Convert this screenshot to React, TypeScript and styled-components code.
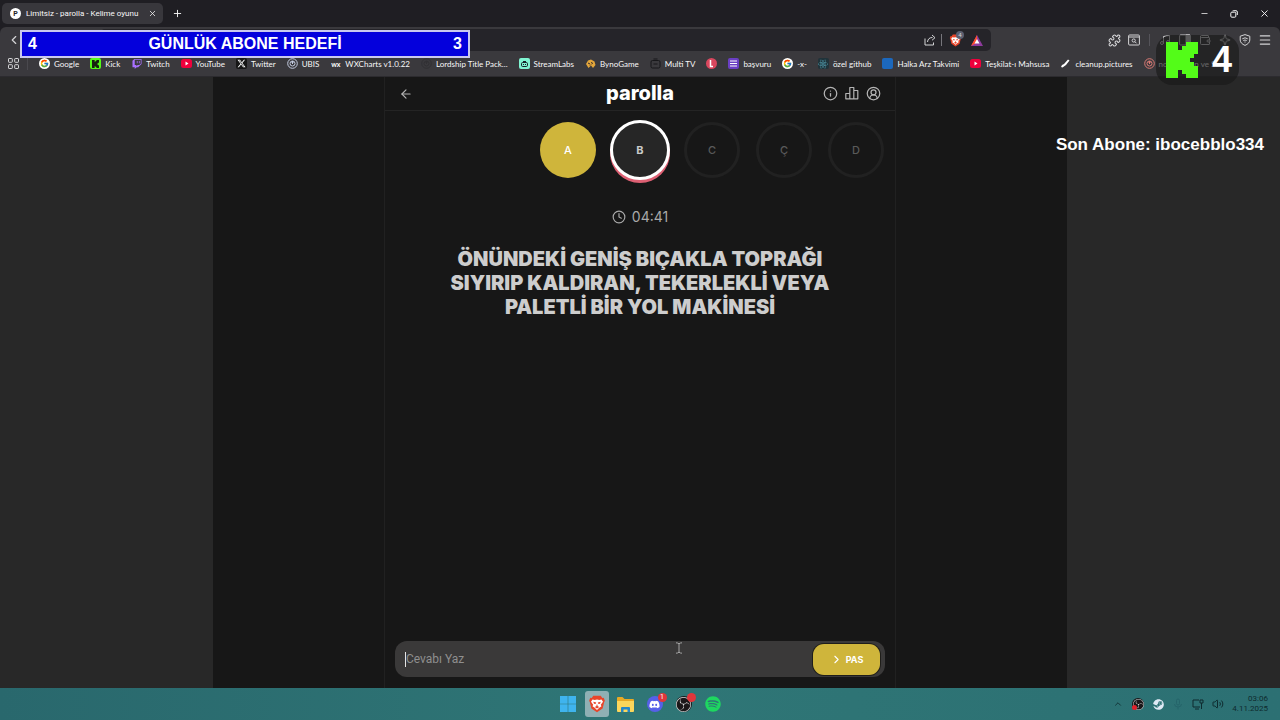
import React from "react";
import styled, { createGlobalStyle } from "styled-components";
import {
  ArrowLeft,
  ChevronLeft,
  ChevronRight,
  ChevronUp,
  CircleUserRound,
  Clock,
  Info,
  Menu,
  Minus,
  Music,
  Plus,
  Puzzle,
  Sparkle,
  Volume2,
  Wallet,
  X,
} from "lucide-react";
import { FaDiscord, FaReact, FaSpotify, FaSteam, FaTwitch, FaXTwitter } from "react-icons/fa6";
import { FcGoogle } from "react-icons/fc";
import { SiObsstudio } from "react-icons/si";

const GlobalStyle = createGlobalStyle`
  *, *::before, *::after { box-sizing: border-box; }
  body { margin: 0; background: #282828; }
  button { border: 0; padding: 0; background: none; color: inherit; font: inherit; cursor: pointer; }
  a { color: inherit; text-decoration: none; }
  svg { display: block; flex: none; }
`;

const Screen = styled.div`
  position: relative;
  display: flex;
  flex-direction: column;
  min-height: 100vh;
  overflow: hidden;
  color: #f8f8f8;
  font-family: Roboto, "Noto Sans", sans-serif;
  font-size: 8px;
`;

/* ---------- browser ---------- */

const TitleBar = styled.header`
  display: flex;
  align-items: center;
  height: 27px;
  padding: 0 10px 0 2px;
  background: #1f1e23;
`;

const Tab = styled.div`
  display: flex;
  align-items: center;
  gap: 5px;
  width: 161px;
  height: 21px;
  padding: 0 6px 0 8px;
  border-radius: 5px;
  background: #38373c;
`;

const TabTitle = styled.span`
  flex: 1;
  white-space: nowrap;
`;

const IconButton = styled.button<{ $size?: number }>`
  position: relative;
  display: flex;
  align-items: center;
  justify-content: center;
  width: ${(p) => p.$size ?? 12}px;
  height: ${(p) => p.$size ?? 12}px;
`;

const NewTab = styled(IconButton)`
  margin-left: 8px;
`;

const WindowControls = styled.div`
  display: flex;
  gap: 18px;
  margin-left: auto;
`;

const Toolbar = styled.nav`
  display: flex;
  align-items: center;
  height: 27px;
  padding: 0 9px 1px 8px;
  border-radius: 6px 6px 0 0;
  background: #3a393d;
  color: #d4d4d6;
`;

const ToolbarBack = styled.div`
  background: #1f1e23;
`;

const AddressBar = styled.div`
  display: flex;
  flex: 1;
  align-items: center;
  justify-content: flex-end;
  gap: 5px;
  height: 22px;
  margin: 0 117px 0 80px;
  padding: 0 5px 0 7px;
  border-radius: 5px;
  background: #252429;
`;

const ShieldWrap = styled.span`
  position: relative;
`;

const ShieldCount = styled.span`
  position: absolute;
  top: -1px;
  right: -1px;
  width: 8px;
  height: 8px;
  border-radius: 4px;
  background: #5c5f70;
  font-size: 6px;
  line-height: 8px;
  text-align: center;
`;

const Separator = styled.span<{ $color?: string }>`
  width: 1px;
  height: 12px;
  background: ${(p) => p.$color ?? "#55545a"};
`;

const ToolGroup = styled.div`
  display: flex;
  align-items: center;
  gap: 8px;
`;

const ToolSeparator = styled(Separator)`
  margin: 0 1px;
`;

const Bookmarks = styled.nav`
  display: flex;
  align-items: center;
  gap: 11px;
  height: 23px;
  padding: 0 8px 3px;
  border-bottom: 1px solid #2c2b2f;
  background: #3a393d;
  font-family: Lato, Roboto, sans-serif;
`;

const Bookmark = styled.a`
  display: flex;
  flex: none;
  align-items: center;
  gap: 4px;
  line-height: 12px;
  white-space: nowrap;
`;

const Glyph = styled.span<{ $bg?: string; $color?: string; $round?: boolean }>`
  display: flex;
  align-items: center;
  justify-content: center;
  width: 11px;
  height: 11px;
  border-radius: ${(p) => (p.$round ? 6 : 2)}px;
  background: ${(p) => p.$bg ?? "transparent"};
  color: ${(p) => p.$color ?? "#fff"};
  font-size: 7px;
  font-weight: 700;
`;

/* ---------- game ---------- */

const Page = styled.main`
  display: flex;
  flex: 1;
  justify-content: center;
  background: #282828;
  font-family: Inter, Roboto, sans-serif;
`;

const Stage = styled.div`
  display: flex;
  flex: 0 1 854px;
  justify-content: center;
  background: #171717;
`;

const Game = styled.section`
  display: flex;
  flex: 0 1 512px;
  flex-direction: column;
  border: solid #212121;
  border-width: 0 1px;
`;

const GameHeader = styled.header`
  display: grid;
  grid-template-columns: 1fr auto 1fr;
  align-items: center;
  height: 34px;
  padding: 0 14px;
  border-bottom: 1px solid #242424;
  color: #b4b4b4;
`;

const Brand = styled.h1`
  margin: 0;
  padding-bottom: 2px;
  color: #fff;
  font-size: 20px;
  font-weight: 800;
  line-height: 24px;
`;

const HeaderActions = styled.div`
  display: flex;
  justify-content: flex-end;
  gap: 7px;
`;

const Letters = styled.ol`
  display: flex;
  align-items: center;
  justify-content: flex-end;
  gap: 16px;
  height: 77px;
  margin: 0;
  padding: 0 11px;
  list-style: none;
`;

type LetterState = "passed" | "current" | "idle";

const letterLooks: Record<LetterState, string> = {
  passed: "background: #cfb53b; color: #fff;",
  current:
    "width: 60px; height: 60px; margin: 0 -2px; border: 3px solid #fff; background: #262626; color: #c9c9c9; font-weight: 700; box-shadow: 0 3px 0 #dd6073;",
  idle: "border: 3px solid #212121; color: #5a5a5a;",
};

const Letter = styled.li<{ $state: LetterState }>`
  display: flex;
  align-items: center;
  justify-content: center;
  width: 56px;
  height: 56px;
  border-radius: 50%;
  font-size: 11px;
  font-weight: 500;
  ${(p) => letterLooks[p.$state]}
`;

const Timer = styled.div`
  display: flex;
  align-items: center;
  justify-content: center;
  gap: 6px;
  margin-top: 20px;
  color: #a9a9a9;
  font-size: 14px;
  line-height: 18px;
`;

const Question = styled.h2`
  margin: 21px 48px 0;
  color: #cdcdcd;
  font-size: 20px;
  font-weight: 900;
  line-height: 24px;
  text-align: center;
`;

const AnswerForm = styled.form`
  display: flex;
  align-items: center;
  height: 36px;
  margin: auto 10px 11px;
  padding: 0 5px 0 10px;
  border-radius: 12px;
  background: #3a3939;
`;

const Caret = styled.span`
  width: 1px;
  height: 15px;
  background: #e4e4e4;
`;

const AnswerInput = styled.input`
  flex: 1;
  min-width: 0;
  padding: 0;
  border: 0;
  outline: 0;
  background: transparent;
  color: #e4e4e4;
  font: 12px/18px Roboto, sans-serif;
  &::placeholder { color: #8f8f8f; opacity: 1; }
`;

const PassButton = styled.button`
  display: flex;
  align-items: center;
  justify-content: center;
  gap: 3px;
  width: 67px;
  height: 31px;
  border-radius: 11px;
  background: #cfb53b;
  box-shadow: 0 0 0 1px #1f1e1a;
  color: #fff;
  font-size: 9px;
  font-weight: 700;
`;

/* ---------- desktop ---------- */

const Taskbar = styled.footer`
  display: grid;
  grid-template-columns: 1fr auto 1fr;
  align-items: center;
  height: 32px;
  padding: 0 12px;
  background: linear-gradient(90deg, #29686d, #2f7676 50%, #2c7073);
`;

const Apps = styled.div`
  display: flex;
  grid-column: 2;
  gap: 5px;
`;

const AppButton = styled.button<{ $active?: boolean }>`
  position: relative;
  display: flex;
  align-items: center;
  justify-content: center;
  width: 24px;
  height: 26px;
  border-radius: 3px;
  background: ${(p) => (p.$active ? "#8fb0b4" : "transparent")};
`;

const AppBadge = styled.span`
  position: absolute;
  top: 2px;
  right: 0;
  width: 9px;
  height: 9px;
  border-radius: 5px;
  background: #e0363b;
  color: #fff;
  font-size: 7px;
  line-height: 9px;
  text-align: center;
`;

const Tray = styled.div`
  display: flex;
  align-items: center;
  justify-content: flex-end;
  gap: 8px;
  color: #0f2b2f;
`;

const TrayDot = styled.span`
  position: absolute;
  bottom: 0;
  left: 0;
  width: 5px;
  height: 5px;
  border-radius: 3px;
  background: #e0222c;
`;

const DateTime = styled.time`
  text-align: right;
  font-size: 8px;
  line-height: 10px;
`;

/* ---------- stream overlays ---------- */

const GoalBar = styled.div`
  position: absolute;
  top: 30px;
  left: 20px;
  display: flex;
  align-items: center;
  justify-content: space-between;
  width: 450px;
  height: 28px;
  padding: 0 6px;
  border: 2px solid #c9c8ee;
  background: #0400dc;
  color: #fff;
  font: 700 16px/20px "Liberation Sans", Arial, sans-serif;
`;

const KickCounter = styled.div`
  position: absolute;
  top: 35px;
  right: 41px;
  display: flex;
  align-items: center;
  gap: 14px;
  height: 50px;
  padding: 0 7px 0 10px;
  border-radius: 16px;
  background: rgba(24, 24, 25, 0.65);
  color: #fff;
  font: 700 36px/50px "Liberation Sans", Arial, sans-serif;
`;

const LastSubscriber = styled.div`
  position: absolute;
  top: 135px;
  right: 16px;
  color: #fff;
  font: 700 17px/20px "Liberation Sans", Arial, sans-serif;
`;

const Pointer = styled.svg`
  position: absolute;
  top: 642px;
  left: 675px;
`;

/* ---------- drawings ---------- */

const KickLogo = ({ w, h }: { w: number; h: number }) => (
  <svg width={w} height={h} viewBox="0 0 8 9" preserveAspectRatio="none" fill="#53fc18">
    <path d="M0 0h3v2h1V1h1V0h3v3H7v1H6v1h1v1h1v3H5V8H4V7H3v2H0z" />
  </svg>
);

const BraveLion = ({ size }: { size: number }) => (
  <svg width={size} height={size} viewBox="0 0 24 24">
    <path d="M7 1h10l2 3 2-.5 1.500 4-1 2-2 8.500L12 23l-7.500-5-2-8.500-1-2L3 3.500 5 4z" fill="#e8452a" />
    <path d="M6 6l3 .5L12 6l3 .5L18 6l2 3-3 4 1 2-3 2-3 3-3-3-3-2 1-2-3-4z" fill="#fff" />
    <path d="M7 9l4 1-1 2-2-.5zM17 9l-4 1 1 2 2-.5zM12 12l1 3 2 1-3 2-3-2 2-1z" fill="#e8452a" />
  </svg>
);

const Rewards = () => (
  <svg width="12" height="11" viewBox="0 0 12 11">
    <path d="M6 0L12 11H0z" fill="#8d3a9c" />
    <path d="M6 0L0 11l6-3.500z" fill="#ff4f2b" />
    <path d="M6 4l2.500 4.500h-5z" fill="#fff" />
  </svg>
);

const YouTube = () => (
  <svg width="11" height="9" viewBox="0 0 11 9">
    <rect width="11" height="9" rx="2.500" fill="#f0003c" />
    <path d="M4.500 2.500v4L7.500 4.500z" fill="#fff" />
  </svg>
);

const AppsGrid = () => (
  <svg width="11" height="11" viewBox="0 0 11 11" fill="none" stroke="#d8d8da">
    <rect x=".5" y=".5" width="3.800" height="3.800" rx=".6" />
    <rect x="6.700" y=".5" width="3.800" height="3.800" rx=".6" />
    <rect x=".5" y="6.700" width="3.800" height="3.800" rx=".6" />
    <rect x="6.700" y="6.700" width="3.800" height="3.800" rx=".6" />
  </svg>
);

const Seal = ({ color }: { color: string }) => (
  <svg width="11" height="11" viewBox="0 0 11 11" fill="none" stroke={color}>
    <circle cx="5.500" cy="5.500" r="4.800" />
    <circle cx="5.500" cy="5.500" r="2.500" />
    <path d="M5.500 3v3M4.500 4.500h2" />
  </svg>
);

const Share = () => (
  <svg width="12" height="12" viewBox="0 0 12 12" fill="none" stroke="currentColor">
    <path d="M1 4.500V11h8.500V8.500M3.500 8c.3-3 2-4.500 5-4.500M8 1l3 2.700L8 6.300" />
  </svg>
);

const SearchWindow = () => (
  <svg width="12" height="12" viewBox="0 0 12 12" fill="none" stroke="currentColor">
    <rect x=".6" y="1" width="10.800" height="10" rx="1" />
    <path d="M1 3h10" />
    <circle cx="5.700" cy="6.500" r="1.600" />
    <path d="M7 7.800l1.500 1.500" />
  </svg>
);

const SidePanel = () => (
  <svg width="12" height="12" viewBox="0 0 12 12" fill="none" stroke="currentColor">
    <rect x=".6" y="1" width="10.800" height="10" rx="1" />
    <path d="M7 1h4v10H7z" fill="currentColor" />
  </svg>
);

const ShieldIcon = () => (
  <svg width="12" height="12" viewBox="0 0 12 12" fill="none" stroke="currentColor">
    <path d="M6 .6l4.800 1.600V6c0 2.500-2 4.200-4.800 5.400C3.200 10.200 1.200 8.500 1.200 6V2.200z" />
    <path d="M3.300 4.800q2.700-2 5.400 0M4.300 6.500q1.700-1 3.400 0M6 7.500v1" />
  </svg>
);

const Restore = () => (
  <svg width="8" height="8" viewBox="0 0 8 8" fill="none" stroke="currentColor">
    <rect x=".8" y="2.200" width="5" height="5" rx="1" />
    <path d="M2.500 1.200q0-.5 1-.5H6q1.300 0 1.300 1.300v3" />
  </svg>
);

const BarChart = () => (
  <svg width="14" height="14" viewBox="0 0 14 14" fill="none" stroke="currentColor" strokeWidth="1.200" strokeLinejoin="round">
    <path d="M.8 12.800V7.500h4v5.300zM4.800 12.800V1.500h4v11.300M8.800 4.500h4v8.300H.8" />
  </svg>
);

const WindowsLogo = () => (
  <svg width="16" height="16" viewBox="0 0 16 16" fill="#3fb4ee">
    <path d="M0 0h7.700v7.700H0zM8.300 0H16v7.700H8.300zM0 8.300h7.700V16H0zM8.300 8.300H16V16H8.300z" />
  </svg>
);

const Folder = () => (
  <svg width="17" height="15" viewBox="0 0 17 15">
    <path d="M0 1q0-1 1-1h4.500l2 2H16q1 0 1 1v11H0z" fill="#e8a925" />
    <path d="M0 4h17v10q0 1-1 1H1q-1 0-1-1z" fill="#fbd65c" />
    <path d="M4 15v-4q0-1 1-1h7q1 0 1 1v4h-2.500v-2.500h-4V15z" fill="#2687c9" />
  </svg>
);

const Disc = styled.span<{ $size: number }>`
  display: flex;
  align-items: center;
  justify-content: center;
  width: ${(p) => p.$size}px;
  height: ${(p) => p.$size}px;
  border-radius: 50%;
  background: #1b1719;
  color: #d9d9d9;
`;

const DiscordDisc = styled(Disc)`
  background: #5660e8;
  color: #fff;
`;

const Obs = ({ size }: { size: number }) => (
  <Disc $size={size}>
    <SiObsstudio size={size - 1} />
  </Disc>
);

const Monitor = () => (
  <svg width="12" height="11" viewBox="0 0 12 11" fill="none" stroke="currentColor">
    <path d="M7 1H1v7h7M3 10h4M8 1h3v3H8zM9.500 4v6" />
  </svg>
);

const Mic = () => (
  <svg width="10" height="12" viewBox="0 0 10 12" fill="none" stroke="#25646a">
    <rect x="3.500" y="1" width="3" height="6" rx="1.500" />
    <path d="M1.500 6q0 3 3.500 3t3.500-3M5 9v2.500" />
  </svg>
);

const bookmarks: { label: string; icon: React.ReactNode }[] = [
  { label: "Google", icon: <Glyph $bg="#fff" $round><FcGoogle size={9} /></Glyph> },
  { label: "Kick", icon: <Glyph $bg="#53fc18" $color="#111"><svg width="7" height="8" viewBox="0 0 8 9" fill="#17230f"><path d="M0 0h3v2h1V1h1V0h3v3H7v1H6v1h1v1h1v3H5V8H4V7H3v2H0z" /></svg></Glyph> },
  { label: "Twitch", icon: <Glyph $color="#a970ff"><FaTwitch size={10} /></Glyph> },
  { label: "YouTube", icon: <Glyph><YouTube /></Glyph> },
  { label: "Twitter", icon: <Glyph $bg="#161616"><FaXTwitter size={9} /></Glyph> },
  { label: "UBIS", icon: <Glyph><Seal color="#c3cbe0" /></Glyph> },
  { label: "WXCharts v1.0.22", icon: <Glyph>wx</Glyph> },
  { label: "Lordship Title Pack...", icon: <Glyph><Seal color="#313034" /></Glyph> },
  { label: "StreamLabs", icon: <Glyph $bg="#80f5d2"><svg width="7" height="6" viewBox="0 0 7 6" fill="none" stroke="#17252a"><rect x=".5" y="1.500" width="6" height="4" rx="1.200" /><path d="M2.500 3v1M4.500 3v1M2 .5h3" /></svg></Glyph> },
  { label: "BynoGame", icon: <Glyph><svg width="11" height="10" viewBox="0 0 11 10"><path d="M1 5l2-3.500 3-1 3.500 2L10.500 6 8 9 6 6.500 3.500 9z" fill="#e2a63b" /><path d="M3 4l2 1M6.500 3l1 2M5 6.500l1-1" stroke="#33292a" /></svg></Glyph> },
  { label: "Multi TV", icon: <Glyph><svg width="11" height="11" viewBox="0 0 11 11" fill="none" stroke="#17171a"><rect x="1" y="2.500" width="9" height="7.500" rx="1.500" /><path d="M3.500 1h4M3.500 6h4" /></svg></Glyph> },
  { label: "", icon: <Glyph $bg="#d9475e" $round><svg width="5" height="8" viewBox="0 0 5 8" fill="none" stroke="#fff" strokeWidth="1.500"><path d="M1.500 0v6.500H4" /></svg></Glyph> },
  { label: "başvuru", icon: <Glyph $bg="#6a3fc4"><svg width="7" height="7" viewBox="0 0 7 7" stroke="#fff"><path d="M0 1h7M0 3.500h7M0 6h7" /></svg></Glyph> },
  { label: "-x-", icon: <Glyph $bg="#fff" $round><FcGoogle size={9} /></Glyph> },
  { label: "özel github", icon: <Glyph $bg="#20333a" $color="#4f97a8"><FaReact size={10} /></Glyph> },
  { label: "Halka Arz Takvimi", icon: <Glyph $bg="#1c68bd" /> },
  { label: "Teşkilat-ı Mahsusa", icon: <Glyph><YouTube /></Glyph> },
  { label: "cleanup.pictures", icon: <Glyph><svg width="9" height="9" viewBox="0 0 9 9" fill="#fff"><path d="M1 6l2-1L7 .5 8.500 1.500 5 6 1.500 8.500 0 8z" /></svg></Glyph> },
  { label: "notification ve Ser", icon: <Glyph><Seal color="#d97a74" /></Glyph> },
];

const letters: { char: string; state: LetterState }[] = [
  { char: "A", state: "passed" },
  { char: "B", state: "current" },
  { char: "C", state: "idle" },
  { char: "Ç", state: "idle" },
  { char: "D", state: "idle" },
];

export default function App() {
  return (
    <Screen lang="tr">
      <GlobalStyle />
      <TitleBar>
        <Tab>
          <Glyph $bg="#fff" $color="#222" $round>P</Glyph>
          <TabTitle>Limitsiz - parolla - Kelime oyunu</TabTitle>
          <IconButton $size={9} aria-label="Sekmeyi kapat"><X size={9} /></IconButton>
        </Tab>
        <NewTab aria-label="Yeni sekme"><Plus size={11} /></NewTab>
        <WindowControls>
          <IconButton aria-label="Simge durumuna küçült"><Minus size={9} /></IconButton>
          <IconButton aria-label="Geri yükle"><Restore /></IconButton>
          <IconButton aria-label="Kapat"><X size={11} /></IconButton>
        </WindowControls>
      </TitleBar>

      <ToolbarBack>
        <Toolbar>
          <IconButton aria-label="Geri"><ChevronLeft size={14} /></IconButton>
          <AddressBar>
            <IconButton aria-label="Paylaş"><Share /></IconButton>
            <Separator $color="#77767c" />
            <ShieldWrap>
              <IconButton $size={16} aria-label="Kalkanlar"><BraveLion size={13} /></IconButton>
              <ShieldCount>4</ShieldCount>
            </ShieldWrap>
            <IconButton $size={18} aria-label="Ödüller"><Rewards /></IconButton>
          </AddressBar>
          <ToolGroup>
            <IconButton aria-label="Uzantılar"><Puzzle size={13} /></IconButton>
            <IconButton aria-label="Sekmelerde ara"><SearchWindow /></IconButton>
            <ToolSeparator />
            <IconButton aria-label="Medya"><Music size={12} /></IconButton>
            <IconButton aria-label="Yan panel"><SidePanel /></IconButton>
            <IconButton aria-label="Cüzdan"><Wallet size={12} /></IconButton>
            <IconButton aria-label="Leo"><Sparkle size={12} /></IconButton>
            <IconButton aria-label="VPN"><ShieldIcon /></IconButton>
            <IconButton aria-label="Menü"><Menu size={14} /></IconButton>
          </ToolGroup>
        </Toolbar>
      </ToolbarBack>

      <Bookmarks>
        <ToolGroup>
          <IconButton $size={11} aria-label="Tüm yer imleri"><AppsGrid /></IconButton>
          <Separator $color="#4a494e" />
        </ToolGroup>
        {bookmarks.map((b, i) => (
          <Bookmark key={i} href="#">
            {b.icon}
            {b.label && <span>{b.label}</span>}
          </Bookmark>
        ))}
      </Bookmarks>

      <Page>
        <Stage>
          <Game>
            <GameHeader>
              <IconButton $size={14} aria-label="Geri dön"><ArrowLeft size={14} /></IconButton>
              <Brand>parolla</Brand>
              <HeaderActions>
                <IconButton $size={15} aria-label="Bilgi"><Info size={15} /></IconButton>
                <IconButton $size={14} aria-label="İstatistikler"><BarChart /></IconButton>
                <IconButton $size={15} aria-label="Profil"><CircleUserRound size={15} /></IconButton>
              </HeaderActions>
            </GameHeader>
            <Letters>
              {letters.map((l) => (
                <Letter key={l.char} $state={l.state}>{l.char}</Letter>
              ))}
            </Letters>
            <Timer>
              <Clock size={14} />
              <span>04:41</span>
            </Timer>
            <Question>
              ÖNÜNDEKİ GENİŞ BIÇAKLA TOPRAĞI SIYIRIP KALDIRAN, TEKERLEKLİ VEYA PALETLİ BİR YOL MAKİNESİ
            </Question>
            <AnswerForm onSubmit={(e) => e.preventDefault()}>
              <Caret />
              <AnswerInput aria-label="Cevap" placeholder="Cevabı Yaz" />
              <PassButton type="button">
                <ChevronRight size={13} />
                PAS
              </PassButton>
            </AnswerForm>
          </Game>
        </Stage>
      </Page>

      <Taskbar>
        <Apps>
          <AppButton aria-label="Başlat"><WindowsLogo /></AppButton>
          <AppButton $active aria-label="Brave"><BraveLion size={18} /></AppButton>
          <AppButton aria-label="Dosya Gezgini"><Folder /></AppButton>
          <AppButton aria-label="Discord">
            <DiscordDisc $size={16}><FaDiscord size={11} /></DiscordDisc>
            <AppBadge>1</AppBadge>
          </AppButton>
          <AppButton aria-label="OBS">
            <Obs size={16} />
            <AppBadge />
          </AppButton>
          <AppButton aria-label="Spotify"><FaSpotify size={16} color="#1ed760" /></AppButton>
        </Apps>
        <Tray>
          <IconButton aria-label="Gizli simgeler"><ChevronUp size={10} /></IconButton>
          <IconButton aria-label="OBS">
            <Obs size={12} />
            <TrayDot />
          </IconButton>
          <IconButton aria-label="Steam"><FaSteam size={11} color="#dfe9f5" /></IconButton>
          <IconButton aria-label="Mikrofon"><Mic /></IconButton>
          <IconButton aria-label="Ağ"><Monitor /></IconButton>
          <IconButton aria-label="Ses"><Volume2 size={12} /></IconButton>
          <DateTime>
            03:06
            <br />
            4.11.2025
          </DateTime>
        </Tray>
      </Taskbar>

      <GoalBar>
        <span>4</span>
        <span>GÜNLÜK ABONE HEDEFİ</span>
        <span>3</span>
      </GoalBar>
      <KickCounter>
        <KickLogo w={32} h={36} />
        <span>4</span>
      </KickCounter>
      <LastSubscriber>Son Abone: ibocebblo334</LastSubscriber>
      <Pointer width="8" height="12" viewBox="0 0 8 12" fill="none" stroke="#a5a5a5">
        <path d="M1 .8q2 0 3 1 1-1 3-1M1 11.200q2 0 3-1 1 1 3 1M4 1.500v9" />
      </Pointer>
    </Screen>
  );
}
